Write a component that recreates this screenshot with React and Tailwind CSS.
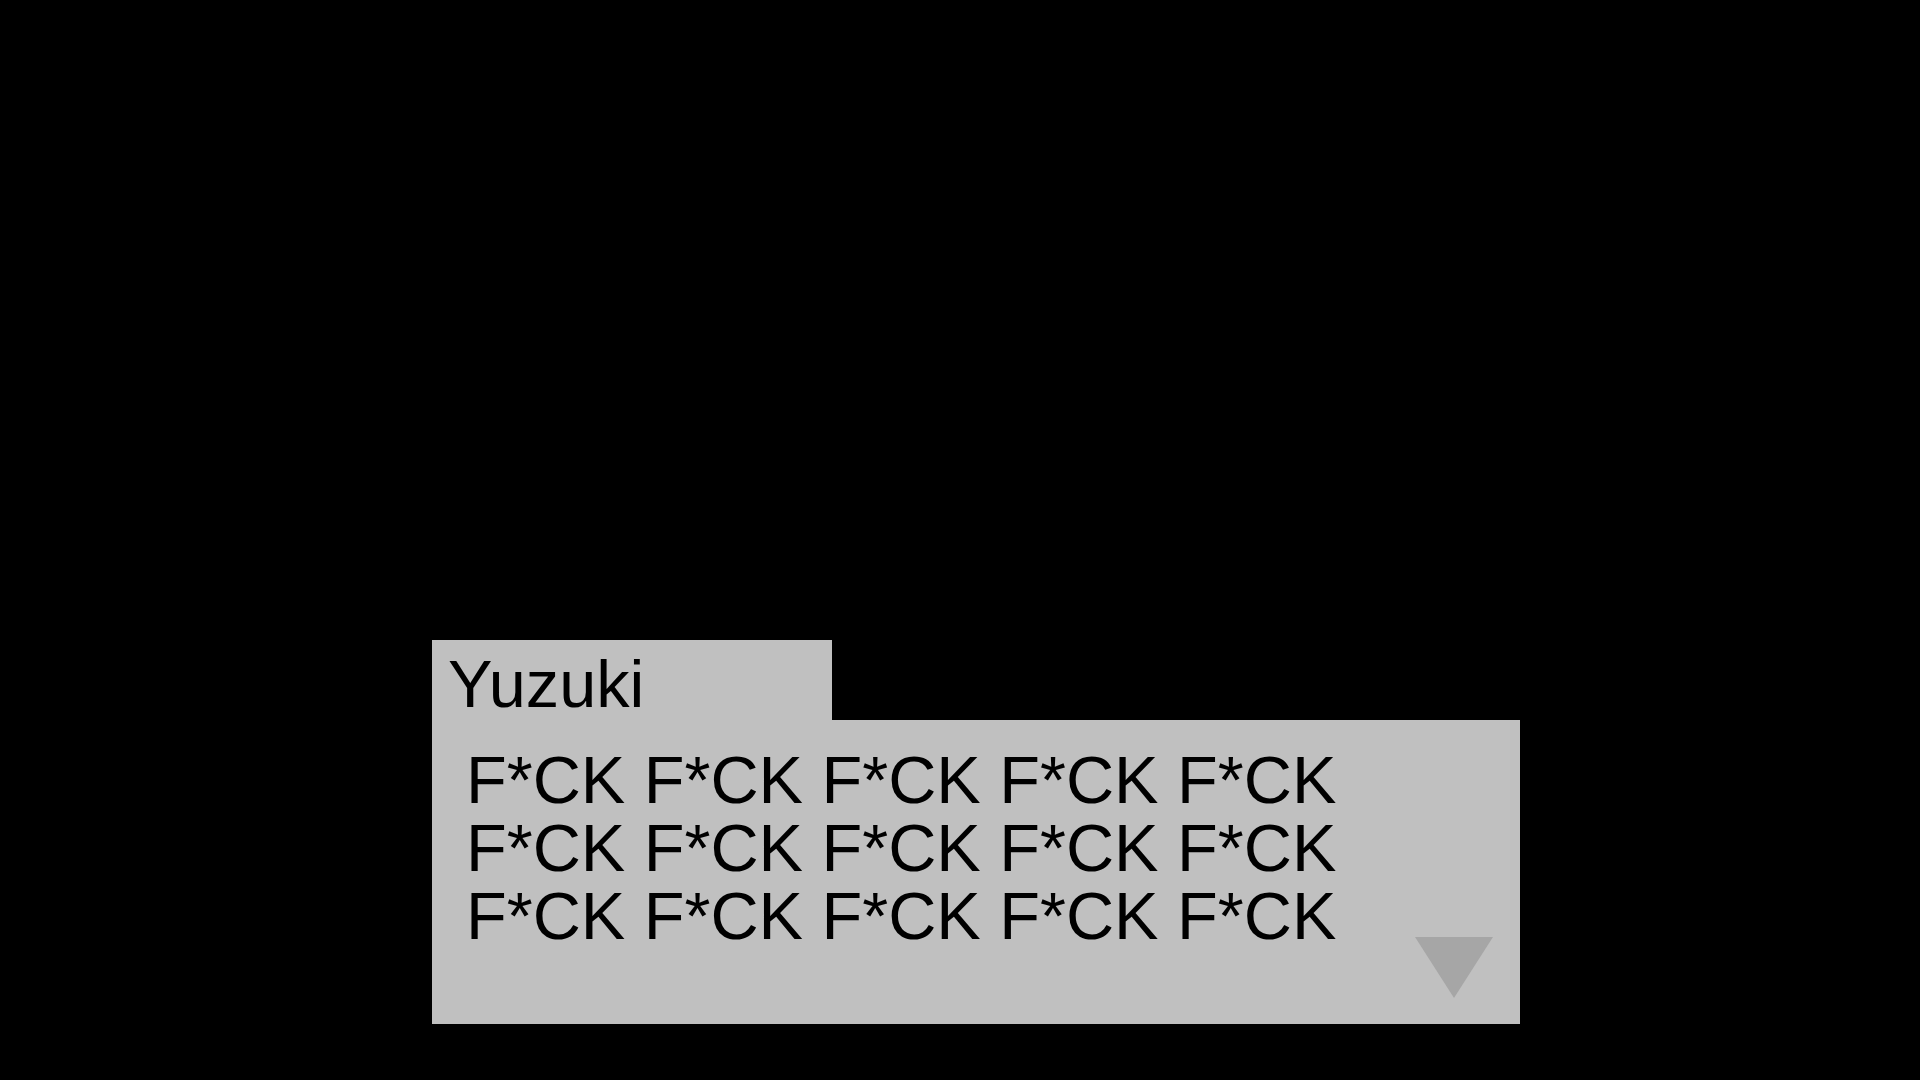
export default function App() {
  const line = "F*CK F*CK F*CK F*CK F*CK";
  return (
    <div
      className="w-[1920px] h-[1080px] bg-black flex flex-col justify-end pl-[432px] pb-[56px] overflow-hidden"
      style={{ fontFamily: '"Liberation Sans", Arial, sans-serif' }}
    >
      <div className="w-[400px] h-[80px] bg-[#c0c0c0] pl-[16px] pt-[10px] text-[66.67px] leading-[68px] text-black">
        Yuzuki
      </div>
      <div className="relative w-[1088px] h-[304px] bg-[#c0c0c0] pl-[34px] pt-[26px] text-[66.67px] leading-[68px] text-black">
        <div>{line}</div>
        <div>{line}</div>
        <div>{line}</div>
        <svg
          className="absolute right-[27px] bottom-[26px]"
          width="78"
          height="61"
          viewBox="0 0 78 61"
        >
          <polygon points="0,0 78,0 39,61" fill="#a6a6a6" />
        </svg>
      </div>
    </div>
  );
}
